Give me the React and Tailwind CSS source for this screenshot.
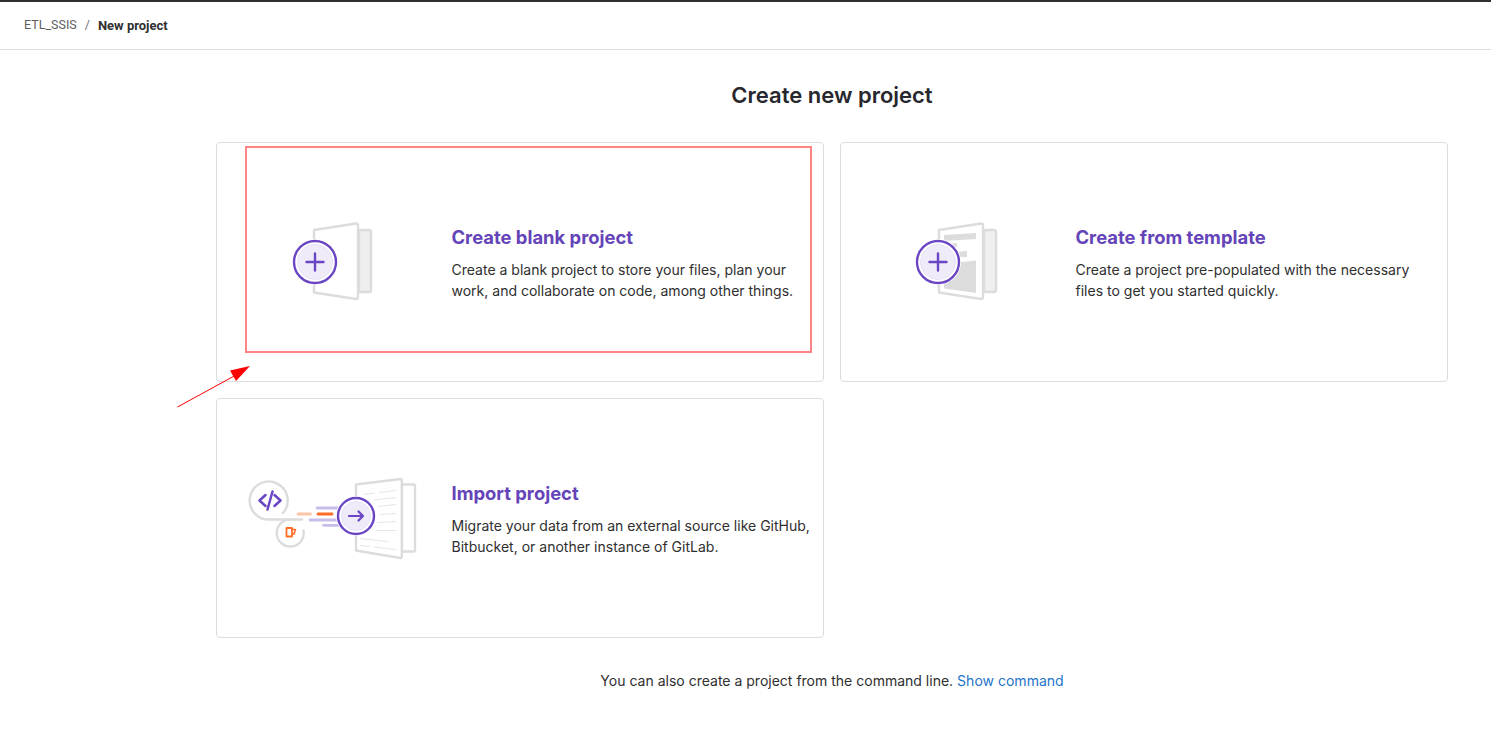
import React from "react";

const G = "#dcdcdc";
const P = "#6a45c4";

function Pages({ template }) {
  return (
    <svg width="120" height="100" viewBox="0 2 120 100" fill="none">
      <rect x="89" y="20" width="12" height="62" rx="2" fill="#efefef" stroke={G} strokeWidth="2.4" />
      <path d="M44 20 L86 13.5 Q88 13.5 88 15.5 L88 87 Q88 89 86 89 L44 82.5 Z" fill="#fff" stroke={G} strokeWidth="2.4" strokeLinejoin="round" />
      {template && (
        <>
          <path d="M49 25 L81 23 L81 29 L49 31 Z" fill={G} />
          <path d="M49 34 L62 33 L62 37 L49 38 Z" fill={G} />
          <path d="M49 43 L72 41 L72 47 L49 48 Z" fill={G} />
          <path d="M49 54 L81 50.5 L81 83 L49 78.5 Z" fill={G} />
        </>
      )}
      <g transform={template ? "translate(43 52)" : "translate(45 52)"}>
        <circle r="23" fill="#fff" />
        <circle r="21" fill="#fff" stroke={P} strokeWidth="2.4" />
        <circle r="17.5" fill="#efebf9" stroke="#d9d0f2" strokeWidth="0.5" />
        <path d="M-8.5 0 H8.5 M0 -8.5 V8.5" stroke={P} strokeWidth="2.4" strokeLinecap="round" />
      </g>
    </svg>
  );
}

function ImportArt() {
  const lines = [
    [124, 24, 135, 22.5], [139, 22, 156, 20], [120, 31, 130, 30], [134, 29.5, 156, 27],
    [138, 36, 156, 34], [140, 44, 156, 43], [137, 52, 156, 51], [136, 60, 156, 60],
    [120, 68, 148, 71], [120, 75, 130, 76], [134, 76.5, 156, 79],
  ];
  return (
    <svg width="185" height="95" viewBox="0 0.5 185 95" fill="none">
      <path d="M43 42.5 A19 19 0 1 0 29 49 L62 49" stroke={G} strokeWidth="2.4" strokeLinecap="round" />
      <path d="M50 49 A13.5 13.5 0 1 0 63.5 60" stroke={G} strokeWidth="2.4" strokeLinecap="round" />
      <path d="M25.5 24.5 L19.5 30 L25.5 35.5 M34.5 24.5 L40.5 30 L34.5 35.5 M32.5 21 L27.5 39" stroke={P} strokeWidth="2.5" strokeLinecap="round" strokeLinejoin="round" />
      <path d="M46.5 57.5 H52 V66 H46.5 Z" stroke="#fc6d26" strokeWidth="1.8" strokeLinejoin="round" />
      <path d="M52 59 H55.5 L54 63.5 H52" stroke="#fc6d26" strokeWidth="1.5" strokeLinejoin="round" />
      <path d="M58 43.5 H70.5" stroke="#fdc4a8" strokeWidth="2.8" strokeLinecap="round" />
      <path d="M78 43.5 H92" stroke="#fc6d26" strokeWidth="2.8" strokeLinecap="round" />
      <path d="M77 37.5 H100" stroke="#c9bdeb" strokeWidth="2.8" strokeLinecap="round" />
      <path d="M70 49.5 H98" stroke="#c9bdeb" strokeWidth="2.8" strokeLinecap="round" />
      <path d="M83.5 54.8 H100" stroke="#c9bdeb" strokeWidth="2.8" strokeLinecap="round" />
      <rect x="162" y="14" width="13" height="67" rx="1" fill="#fff" stroke={G} strokeWidth="2.4" />
      <path d="M116 14 L160.5 8.5 Q161.8 8.5 161.8 10 L161.8 86 Q161.8 87.5 160.5 87.5 L116 80 Z" fill="#fff" stroke={G} strokeWidth="2.4" strokeLinejoin="round" />
      {lines.map((l, i) => (
        <line key={i} x1={l[0]} y1={l[1]} x2={l[2]} y2={l[3]} stroke="#e6e6e6" strokeWidth="1" />
      ))}
      <g transform="translate(116 45.5)">
        <circle r="20" fill="#fff" />
        <circle r="18" fill="#fff" stroke={P} strokeWidth="2.4" />
        <circle r="14.5" fill="#efebf9" stroke="#d9d0f2" strokeWidth="0.5" />
        <path d="M-7 0 H7 M2.5 -4.5 L7 0 L2.5 4.5" stroke={P} strokeWidth="2.2" strokeLinecap="round" strokeLinejoin="round" />
      </g>
    </svg>
  );
}

function Card({ art, title, children, overlay }) {
  return (
    <div className="relative flex h-[240px] items-center rounded border border-[#dcdcde] bg-white">
      <div className="flex h-full w-[234.5px] shrink-0 items-center">{art}</div>
      <div className="min-w-0 flex-1 pt-[2px] pr-3">
        <h3 className="mb-[10px] text-[18.4px] leading-[24px] font-bold text-[#6444b8]">{title}</h3>
        <p className="text-[14.03px] leading-[21px] text-[#303030]">{children}</p>
      </div>
      {overlay}
    </div>
  );
}

export default function App() {
  return (
    <div className="relative min-h-[756px] bg-white font-['Inter',sans-serif] text-[#303030]">
      <div className="flex h-[50px] items-center border-t-2 border-b border-t-[#303030] border-b-[#dcdcde] pl-6 font-['Roboto',sans-serif]">
        <span className="text-[12.5px] text-[#5e5e5e]">ETL_SSIS</span>
        <span className="mx-[8px] text-[12.5px] text-[#737278]">/</span>
        <span className="text-[13px] font-bold text-[#303030]">New project</span>
      </div>

      <main className="pl-[216px] pr-[43px]">
        <h1 className="pt-[31px] pb-[33px] text-center text-[22px] leading-[28px] font-semibold text-[#28272d]">
          Create new project
        </h1>

        <div className="grid grid-cols-2 gap-4">
          <Card
            title="Create blank project"
            art={<div className="ml-[53px]"><Pages /></div>}
            overlay={<div className="absolute top-[3px] left-[28px] h-[207px] w-[567px] border-2 border-[#ff8585]" />}
          >
            Create a blank project to store your files, plan your work, and collaborate on code, among other things.
          </Card>
          <Card title="Create from template" art={<div className="ml-[54px]"><Pages template /></div>}>
            Create a project pre-populated with the necessary files to get you started quickly.
          </Card>
          <Card title="Import project" art={<div className="ml-[23px]"><ImportArt /></div>}>
            Migrate your data from an external source like GitHub, Bitbucket, or another instance of GitLab.
          </Card>
        </div>

        <p className="mt-[33px] text-center text-[14.03px] leading-[20px]">
          You can also create a project from the command line.{" "}
          <a className="text-[#1f75cb]">Show command</a>
        </p>
      </main>

      <svg className="absolute top-[360px] left-[170px]" width="90" height="55" viewBox="0 0 90 55" fill="none">
        <line x1="7.5" y1="47" x2="66" y2="15" stroke="#ff0000" strokeWidth="1" />
        <path d="M80 6 L60 10.5 L66 21 Z" fill="#ff0000" />
      </svg>
    </div>
  );
}
